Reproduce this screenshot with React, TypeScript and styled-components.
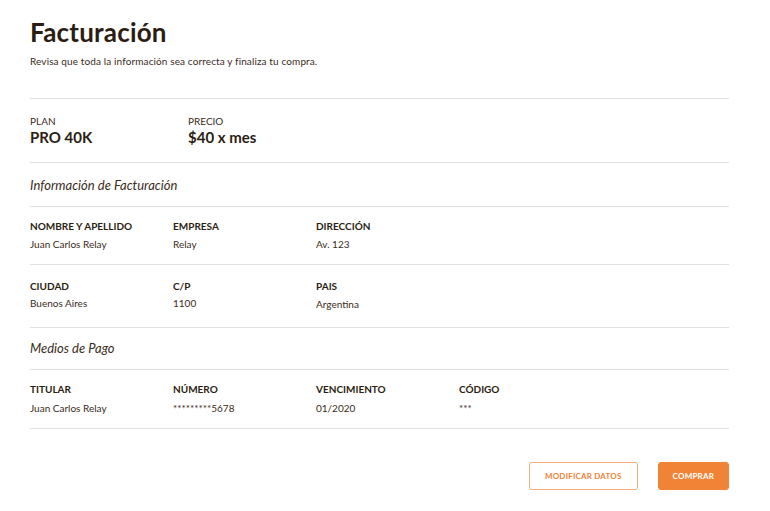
import React from 'react'
import styled, { createGlobalStyle } from 'styled-components'

const GlobalStyle = createGlobalStyle`
  html, body {
    margin: 0;
    padding: 0;
    background: #ffffff;
  }
  body {
    font-family: Lato, "Open Sans", Arial, sans-serif;
    color: #2b1d12;
  }
`

const Page = styled.div`
  padding: 16px 41px 0 30px;
  width: 770px;
  box-sizing: border-box;
`

const Header = styled.header`
  padding-bottom: 30px;
`

const Title = styled.h1`
  margin: 0;
  font-size: 26px;
  font-weight: 700;
  line-height: 32px;
  letter-spacing: 0.2px;
  color: #2b1d12;
`

const Subtitle = styled.p`
  margin: 6px 0 0;
  font-size: 10px;
  line-height: 14px;
  letter-spacing: 0.12px;
  color: #3a2c22;
`

const Divider = styled.hr`
  border: 0;
  border-top: 1px solid #e2e2e2;
  margin: 0;
`

const PlanRow = styled.div`
  display: flex;
  padding: 15px 0 15px;
`

const PlanCol = styled.div<{ $width?: number }>`
  width: ${props => props.$width || 158}px;
  display: flex;
  flex-direction: column;
`

const PlanLabel = styled.span`
  font-size: 10px;
  line-height: 14px;
  text-transform: uppercase;
  color: #3a2c22;
`

const PlanValue = styled.span`
  font-size: 15px;
  font-weight: 700;
  line-height: 19px;
  color: #2b1d12;
`

const SectionTitle = styled.h2<{ $pad?: string }>`
  margin: 0;
  padding: ${props => props.$pad || '14px 0 12px'};
  font-size: 13px;
  line-height: 17px;
  font-weight: 400;
  font-style: italic;
  color: #3a2c22;
`

const FieldRow = styled.div<{ $pad?: string }>`
  display: grid;
  grid-template-columns: repeat(4, 143px);
  padding: ${props => props.$pad || '12px 0 13px'};
`

const Field = styled.div`
  display: flex;
  flex-direction: column;
`

const FieldLabel = styled.span`
  font-size: 10px;
  font-weight: 700;
  line-height: 14px;
  text-transform: uppercase;
  color: #2b1d12;
`

const FieldValue = styled.span<{ $gap: number }>`
  margin-top: ${props => props.$gap}px;
  font-size: 10px;
  line-height: 14px;
  color: #3a2c22;
`

const Actions = styled.div`
  display: flex;
  justify-content: flex-end;
  gap: 20px;
  padding-top: 33px;
`

const Button = styled.button<{ $primary?: boolean }>`
  height: 28px;
  padding: 0 ${props => (props.$primary ? 14 : 15)}px;
  border-radius: 3px;
  font-family: inherit;
  font-size: 8px;
  font-weight: 700;
  letter-spacing: 0.2px;
  text-transform: uppercase;
  cursor: pointer;
  border: 1px solid ${props => (props.$primary ? '#f08336' : '#f5ae7c')};
  background: ${props => (props.$primary ? '#f08336' : '#ffffff')};
  color: ${props => (props.$primary ? '#ffffff' : '#f08336')};
`

type Item = { label: string; value: string; offset?: number }

const Fields = ({ items, pad, gap }: { items: Item[]; pad?: string; gap: number }) => (
  <FieldRow $pad={pad}>
    {items.map(item => (
      <Field key={item.label}>
        <FieldLabel>{item.label}</FieldLabel>
        <FieldValue $gap={gap + (item.offset || 0)}>{item.value}</FieldValue>
      </Field>
    ))}
  </FieldRow>
)

export default function App() {
  return (
    <Page>
      <GlobalStyle />
      <Header>
        <Title>Facturación</Title>
        <Subtitle>Revisa que toda la información sea correcta y finaliza tu compra.</Subtitle>
      </Header>
      <Divider />
      <PlanRow>
        <PlanCol>
          <PlanLabel>Plan</PlanLabel>
          <PlanValue>PRO 40K</PlanValue>
        </PlanCol>
        <PlanCol>
          <PlanLabel>Precio</PlanLabel>
          <PlanValue>$40 x mes</PlanValue>
        </PlanCol>
      </PlanRow>
      <Divider />
      <SectionTitle>Información de Facturación</SectionTitle>
      <Divider />
      <Fields
        gap={4}
        items={[
          { label: 'Nombre y apellido', value: 'Juan Carlos Relay' },
          { label: 'Empresa', value: 'Relay' },
          { label: 'Dirección', value: 'Av. 123' },
        ]}
      />
      <Divider />
      <Fields
        gap={3}
        pad="14px 0 16px"
        items={[
          { label: 'Ciudad', value: 'Buenos Aires' },
          { label: 'C/P', value: '1100' },
          { label: 'Pais', value: 'Argentina', offset: 1 },
        ]}
      />
      <Divider />
      <SectionTitle $pad="12px 0 12px">Medios de Pago</SectionTitle>
      <Divider />
      <Fields
        gap={5}
        items={[
          { label: 'Titular', value: 'Juan Carlos Relay' },
          { label: 'Número', value: '*********5678' },
          { label: 'Vencimiento', value: '01/2020' },
          { label: 'Código', value: '***' },
        ]}
      />
      <Divider />
      <Actions>
        <Button>Modificar datos</Button>
        <Button $primary>Comprar</Button>
      </Actions>
    </Page>
  )
}
